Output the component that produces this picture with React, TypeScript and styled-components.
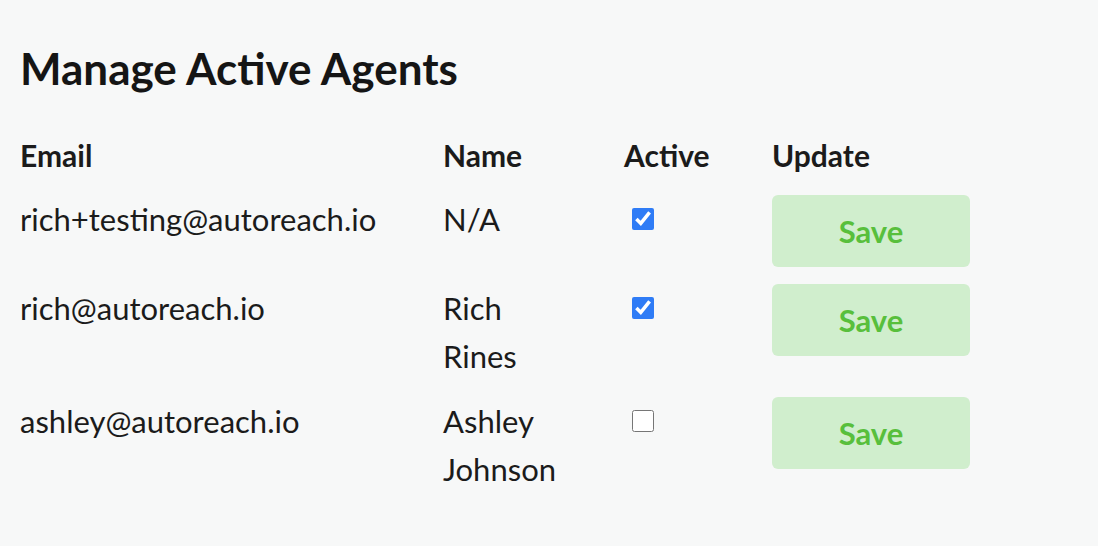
import styled, { createGlobalStyle } from "styled-components";

const GlobalStyle = createGlobalStyle`
  html, body {
    margin: 0;
    padding: 0;
    background: #f7f8f8;
  }
  body {
    font-family: "Source Sans Pro", Lato, "Noto Sans", sans-serif;
    color: #1b1b1b;
  }
`;

const PAGE = styled.div`
  padding: 42px 20px 20px 20px;
`;

const TITLE = styled.h1`
  font-size: 44px;
  font-weight: 700;
  line-height: 1.2;
  margin: 0 0 28px 0;
  color: #151515;
`;

const TABLE = styled.table`
  border-collapse: collapse;
  table-layout: fixed;
  font-size: 31px;
  line-height: 48px;
`;

const HEAD = styled.th<{ $w: number }>`
  width: ${(p) => p.$w}px;
  text-align: left;
  font-weight: 700;
  font-size: 30px;
  padding: 8px 0;
  vertical-align: top;
`;

const CELL = styled.td<{ $wrap?: boolean }>`
  padding: 8px ${(p) => (p.$wrap ? "50px" : "0")} 9px 0;
  vertical-align: top;
  font-weight: 400;
`;

const CHECK = styled.input`
  display: block;
  width: 22px;
  height: 22px;
  margin: 13px 0 0 8px;
  accent-color: #2f7cf6;
`;

const SAVE = styled.button`
  width: 198px;
  height: 72px;
  border: none;
  border-radius: 6px;
  background: #d0eecd;
  color: #58bf3c;
  font-family: inherit;
  font-size: 31px;
  font-weight: 700;
  cursor: pointer;
`;

const agents = [
  { email: "rich+testing@autoreach.io", name: "N/A", active: true },
  { email: "rich@autoreach.io", name: "Rich Rines", active: true },
  { email: "ashley@autoreach.io", name: "Ashley Johnson", active: false },
];

export default function App() {
  return (
    <PAGE>
      <GlobalStyle />
      <TITLE>Manage Active Agents</TITLE>
      <TABLE>
        <thead>
          <tr>
            <HEAD $w={423}>Email</HEAD>
            <HEAD $w={181}>Name</HEAD>
            <HEAD $w={148}>Active</HEAD>
            <HEAD $w={198}>Update</HEAD>
          </tr>
        </thead>
        <tbody>
          {agents.map((a) => (
            <tr key={a.email}>
              <CELL>{a.email}</CELL>
              <CELL $wrap>{a.name}</CELL>
              <CELL>
                <CHECK type="checkbox" defaultChecked={a.active} />
              </CELL>
              <CELL>
                <SAVE>Save</SAVE>
              </CELL>
            </tr>
          ))}
        </tbody>
      </TABLE>
    </PAGE>
  );
}
